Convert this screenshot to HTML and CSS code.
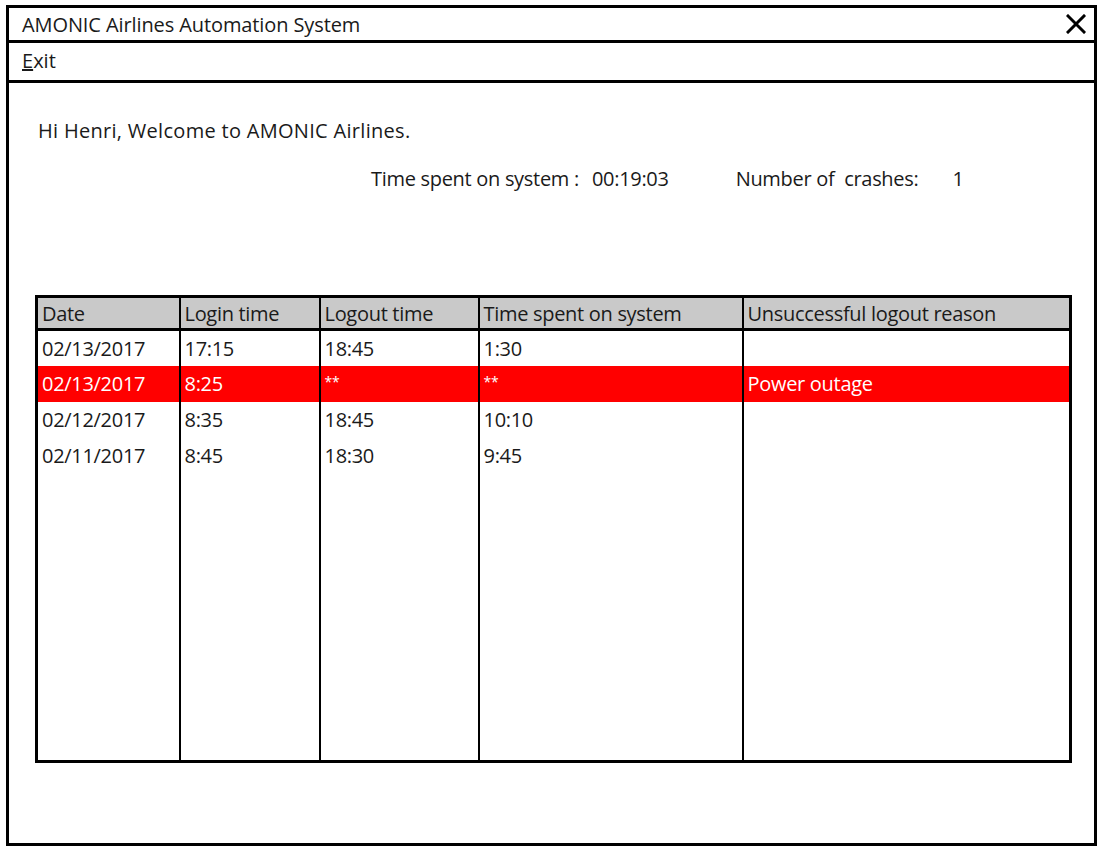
FILE: index.html
```html
<!DOCTYPE html>
<html>
<head>
<meta charset="utf-8">
<link rel="stylesheet" href="styles.css">
</head>
<body>
<div class="window">
  <div class="titlebar">
    <span class="title">AMONIC Airlines Automation System</span>
    <svg class="close" width="20" height="20" viewBox="0 0 20 20"><path d="M2 2 L18 18 M18 2 L2 18" stroke="#000" stroke-width="3" stroke-linecap="square"/></svg>
  </div>
  <div class="menubar"><span class="menu-item"><u>E</u>xit</span></div>
  <div class="content">
    <p class="greeting">Hi Henri, Welcome to AMONIC Airlines.</p>
    <div class="stats">
      <span class="stat-label">Time spent on system :</span>
      <span class="stat-value time">00:19:03</span>
      <span class="stat-label crashes">Number of&nbsp; crashes:</span>
      <span class="stat-value">1</span>
    </div>
    <table class="log">
      <colgroup>
        <col class="c1"><col class="c2"><col class="c3"><col class="c4"><col class="c5">
      </colgroup>
      <thead>
        <tr><th>Date</th><th>Login time</th><th>Logout time</th><th>Time spent on system</th><th>Unsuccessful logout reason</th></tr>
      </thead>
      <tbody>
        <tr><td>02/13/2017</td><td>17:15</td><td>18:45</td><td>1:30</td><td></td></tr>
        <tr class="crash"><td>02/13/2017</td><td>8:25</td><td><span class="stars">**</span></td><td><span class="stars">**</span></td><td>Power outage</td></tr>
        <tr><td>02/12/2017</td><td>8:35</td><td>18:45</td><td>10:10</td><td></td></tr>
        <tr><td>02/11/2017</td><td>8:45</td><td>18:30</td><td>9:45</td><td></td></tr>
        <tr class="filler"><td></td><td></td><td></td><td></td><td></td></tr>
      </tbody>
    </table>
  </div>
</div>
</body>
</html>
```

FILE: styles.css
```css
* { box-sizing: border-box; }
html, body { margin: 0; padding: 0; background: #fff; }
body {
  font-family: "Open Sans", "Noto Sans", "Liberation Sans", sans-serif;
  font-size: 20px;
  color: #1a1a1a;
}
.window {
  margin: 5px 0 0 6px;
  width: 1091px;
  height: 841px;
  border: 3px solid #000;
  display: flex;
  flex-direction: column;
}
.titlebar {
  height: 35px;
  border-bottom: 3px solid #000;
  display: flex;
  align-items: center;
  justify-content: space-between;
  padding: 0 8px 0 13px;
}
.title { letter-spacing: -0.1px; }
.close { display: block; }
.menubar {
  height: 40px;
  border-bottom: 3px solid #000;
  display: flex;
  align-items: center;
  padding: 0 13px 2px;
}
.content {
  flex: 1;
  padding: 0 24px 0 26px;
}
.greeting {
  margin: 35px 0 0 3px;
  line-height: 26px;
  letter-spacing: 0.3px;
}
.stats {
  margin: 22px 0 0 336px;
  display: flex;
  line-height: 26px;
  letter-spacing: -0.3px;
}
.stat-value.time { margin-left: 13px; }
.stats .crashes { margin-left: 67px; }
.stats .crashes + .stat-value { margin-left: 34px; }
.log {
  margin: 103px 0 0 0;
  width: 1034px;
  height: 468px;
  border-collapse: collapse;
  table-layout: fixed;
  border: 3px solid #000;
}
.c1 { width: 143px; }
.c2 { width: 140px; }
.c3 { width: 159px; }
.c4 { width: 264px; }
.c5 { width: 328px; }
.log th, .log td {
  border-left: 2px solid #000;
  border-right: 2px solid #000;
  text-align: left;
  font-weight: normal;
  padding: 0 4px;
  vertical-align: middle;
  letter-spacing: -0.3px;
  white-space: nowrap;
}
.log th {
  background: #c9c9c9;
  height: 33px;
  border-bottom: 3px solid #000;
}
.log td { height: 36px; }
.log tr.crash td { background: #ff0000; color: #fff; }
.stars { font-size: 14px; vertical-align: 4px; }
.log tr.filler td { height: auto; }
```
